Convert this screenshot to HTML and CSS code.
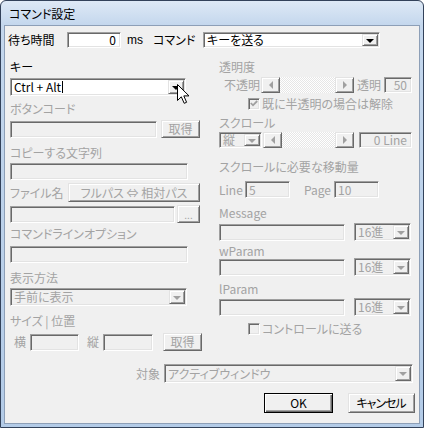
FILE: index.html
```html
<!DOCTYPE html>
<html lang="ja">
<head>
<meta charset="utf-8">
<title>コマンド設定</title>
<link rel="stylesheet" href="styles.css">
</head>
<body>
<div class="window">
  <div class="titlebar">コマンド設定</div>
  <div class="client">
    <div class="toprow">
      <span class="lbl wait-lbl">待ち時間</span>
      <span class="edit en num wait">0</span>
      <span class="lbl ms">ms</span>
      <span class="lbl cmd-lbl">コマンド</span>
      <span class="combo en cmdsel"><span class="ctext">キーを送る</span><span class="dd"><i class="down"></i></span></span>
    </div>

    <div class="cols">
      <div class="col left">
        <div class="lbl">キー</div>
        <div class="combo en keycombo mt4"><span class="ctext">Ctrl + Alt<i class="caret"></i></span><span class="dd"><i class="down"></i></span></div>

        <div class="lbl dis mt6">ボタンコード</div>
        <div class="row mt4 h18">
          <span class="edit w147 h17"></span>
          <span class="btn dis w39 h18 ml4">取得</span>
        </div>

        <div class="lbl dis mt8">コピーする文字列</div>
        <div class="edit w178 h17 mt3"></div>

        <div class="row mt3 h19">
          <span class="lbl dis w58">ファイル名</span>
          <span class="btn dis w132 h19">フルパス ⇔ 相対パス</span>
        </div>
        <div class="row mt3 h18">
          <span class="edit w165 h17"></span>
          <span class="btn dis w23 h18 ml2 dots">...</span>
        </div>

        <div class="lbl dis mt4">コマンドラインオプション</div>
        <div class="edit w178 h17 mt5"></div>

        <div class="lbl dis mt8">表示方法</div>
        <div class="combo dis w177 h18 mt3"><span class="ctext">手前に表示</span><span class="dd"><i class="down"></i></span></div>

        <div class="lbl dis mt8">サイズ | 位置</div>
        <div class="row mt5 h18">
          <span class="lbl dis ml4 w16">横</span>
          <span class="edit w49 h17"></span>
          <span class="lbl dis ml8 w16">縦</span>
          <span class="edit w50 h17"></span>
          <span class="btn dis w39 h18 ml10">取得</span>
        </div>
      </div>

      <div class="col right">
        <div class="lbl dis">透明度</div>
        <div class="row mt3 h16">
          <span class="lbl dis ml5 w37">不透明</span>
          <span class="sb w93"><span class="sbbtn"><i class="lt"></i></span><span class="track"></span><span class="sbbtn"><i class="rt"></i></span></span>
          <span class="lbl dis ml3 w27">透明</span>
          <span class="edit num w28 h16">50</span>
        </div>
        <div class="row mt4 h13">
          <span class="cb ml29"><svg width="8" height="7" viewBox="0 0 8 7"><path d="M0.8 3 L3 5.3 L7.2 1" fill="none" stroke="#a0a0a0" stroke-width="1.8"/></svg></span>
          <span class="lbl dis ml2">既に半透明の場合は解除</span>
        </div>

        <div class="lbl dis mt6">スクロール</div>
        <div class="row mt2 h16">
          <span class="combo dis w43 h16"><span class="ctext">縦</span><span class="dd"><i class="down"></i></span></span>
          <span class="sb w91 ml1"><span class="sbbtn"><i class="lt"></i></span><span class="track"></span><span class="sbbtn"><i class="rt"></i></span></span>
          <span class="edit num w53 h16 ml5">0 Line</span>
        </div>

        <div class="lbl dis mt12">スクロールに必要な移動量</div>
        <div class="row mt7 h17">
          <span class="lbl dis w26">Line</span>
          <span class="edit val w45 h17">5</span>
          <span class="lbl dis ml14 w30">Page</span>
          <span class="edit val w45 h17">10</span>
        </div>

        <div class="lbl dis mt8">Message</div>
        <div class="row mt3 h18">
          <span class="edit w126 h17"></span>
          <span class="combo dis w57 h18 ml9"><span class="ctext">16進</span><span class="dd"><i class="down"></i></span></span>
        </div>

        <div class="lbl dis mt3">wParam</div>
        <div class="row h18">
          <span class="edit w126 h17"></span>
          <span class="combo dis w57 h18 ml9"><span class="ctext">16進</span><span class="dd"><i class="down"></i></span></span>
        </div>

        <div class="lbl dis mt6">lParam</div>
        <div class="row mt2 h18">
          <span class="edit w126 h17"></span>
          <span class="combo dis w57 h18 ml9"><span class="ctext">16進</span><span class="dd"><i class="down"></i></span></span>
        </div>

        <div class="row mt6 h13">
          <span class="cb ml29"></span>
          <span class="lbl dis ml2">コントロールに送る</span>
        </div>
      </div>
    </div>

    <div class="targetrow">
      <span class="lbl dis target-lbl">対象</span>
      <span class="combo dis w249 h19"><span class="ctext">アクティブウィンドウ</span><span class="dd"><i class="down"></i></span></span>
    </div>

    <div class="btnrow">
      <span class="btn default w69 h20">OK</span>
      <span class="btn w67 h20 cancel">キャンセル</span>
    </div>
  </div>

  <svg class="cursor" width="13" height="20" viewBox="0 0 13 20"><path d="M0.5 0.5 V16.5 L4.3 12.8 L7.2 19.3 L9.6 18.3 L6.8 11.9 H12 Z" fill="#fff" stroke="#000" stroke-width="1" stroke-linejoin="miter"/></svg>
</div>
</body>
</html>
```

FILE: styles.css
```css
* { box-sizing: border-box; }
html, body { margin: 0; padding: 0; }
body {
  width: 424px;
  height: 428px;
  overflow: hidden;
  background: #ffffff;
  font-family: "Noto Sans CJK JP", "Liberation Sans", sans-serif;
  font-feature-settings: "palt";
  font-size: 12px;
  line-height: 14px;
  color: #000;
}

.window {
  position: relative;
  width: 424px;
  height: 428px;
  border: 1px solid #33425a;
  border-radius: 6px 6px 0 0;
  background: linear-gradient(to bottom, #dee9f6 0, #c4d7ed 24px, #b3cbe7 100%);
  padding: 0 3px 3px 3px;
  display: flex;
  flex-direction: column;
}

.titlebar {
  height: 24px;
  display: flex;
  align-items: center;
  padding-left: 5px;
  padding-top: 1px;
  color: #000;
}

.client {
  flex: 1;
  background: #f0f0f0;
  border: 1px solid #8d9fb7;
  padding-top: 6px;
  display: flex;
  flex-direction: column;
}

/* generic */
.lbl { display: block; height: 14px; white-space: nowrap; }
.row .lbl, .toprow .lbl { display: inline-block; flex: none; }
.dis { color: #a3a3a3; }
.row { display: flex; align-items: center; }

.edit {
  display: flex;
  align-items: center;
  flex: none;
  background: #f0f0f0;
  border: 1px solid;
  border-color: #a0a0a0 #ffffff #ffffff #a0a0a0;
  box-shadow: inset 1px 1px #696969, inset -1px -1px #e3e3e3;
  padding: 0 3px;
  line-height: 14px;
  color: #a3a3a3;
  white-space: nowrap;
}
.edit.en { background: #fff; color: #000; }
.edit.num { justify-content: flex-end; padding-right: 4px; }
.edit.val { padding-left: 3px; }

.combo {
  display: flex;
  align-items: stretch;
  flex: none;
  background: #f0f0f0;
  border: 1px solid;
  border-color: #a0a0a0 #ffffff #ffffff #a0a0a0;
  box-shadow: inset 1px 1px #696969, inset -1px -1px #e3e3e3;
  padding: 1px;
  line-height: 14px;
  color: #a3a3a3;
}
.combo.en { background: #fff; color: #000; }
.ctext { flex: 1; display: flex; align-items: center; padding-left: 2px; white-space: nowrap; }
.dd {
  width: 16px;
  flex: none;
  display: flex;
  align-items: center;
  justify-content: center;
  background: #f0f0f0;
  border: 1px solid;
  border-color: #e3e3e3 #696969 #696969 #e3e3e3;
  box-shadow: inset 1px 1px #fff, inset -1px -1px #a0a0a0;
}
.down {
  display: block;
  width: 0; height: 0;
  border-left: 4px solid transparent;
  border-right: 4px solid transparent;
  border-top: 4px solid #a0a0a0;
  margin-top: 1px;
}
.combo.en .down { border-top-color: #000; }
.caret { display: inline-block; width: 1px; height: 12px; background: #000; margin-left: 1px; }

.btn {
  display: flex;
  align-items: center;
  justify-content: center;
  flex: none;
  background: #f0f0f0;
  border: 1px solid;
  border-color: #e3e3e3 #696969 #696969 #e3e3e3;
  box-shadow: inset 1px 1px #fff, inset -1px -1px #a0a0a0;
  white-space: nowrap;
  line-height: 14px;
  color: #000;
}
.btn.dis { color: #a3a3a3; }
.btn.dots { align-items: flex-end; padding-bottom: 2px; font-size: 10px; line-height: 10px; }
.btn.default {
  border-color: #000;
  box-shadow: inset 1px 1px #fff, inset -1px -1px #696969, inset -2px -2px #a0a0a0;
}
.cancel { letter-spacing: -1px; padding-right: 1px; }

/* scrollbar */
.sb { display: flex; flex: none; height: 16px; }
.sbbtn {
  width: 19px;
  flex: none;
  display: flex;
  align-items: center;
  justify-content: center;
  background: #f0f0f0;
  border: 1px solid;
  border-color: #e3e3e3 #696969 #696969 #e3e3e3;
  box-shadow: inset 1px 1px #fff, inset -1px -1px #a0a0a0;
}
.track {
  flex: 1;
  background-color: #fff;
  background-image: repeating-conic-gradient(#e6e6e6 0 25%, #ffffff 0 50%);
  background-size: 2px 2px;
}
.lt, .rt { display: block; width: 0; height: 0; border-top: 4px solid transparent; border-bottom: 4px solid transparent; }
.lt { border-right: 4px solid #a0a0a0; }
.rt { border-left: 4px solid #a0a0a0; }

/* checkbox */
.cb {
  width: 12px; height: 12px;
  flex: none;
  display: flex;
  align-items: center;
  justify-content: center;
  background: #f0f0f0;
  border: 1px solid;
  border-color: #a0a0a0 #ffffff #ffffff #a0a0a0;
  box-shadow: inset 1px 1px #696969, inset -1px -1px #e3e3e3;
}

/* top row */
.toprow { display: flex; align-items: center; height: 16px; padding-left: 3px; }
.wait-lbl { width: 59px; }
.wait { width: 54px; height: 16px; }
.ms { width: 26px; margin-left: 6px; font-family: "Liberation Sans", sans-serif; }
.cmd-lbl { width: 50px; }
.cmdsel { width: 177px; height: 16px; }

/* columns */
.cols { display: flex; align-items: flex-start; margin-top: 12px; margin-left: 5px; }
.col { display: flex; flex-direction: column; }
.col.left { width: 192px; }
.col.right { width: 194px; margin-left: 17px; }
.keycombo { width: 176px; height: 18px; }

.targetrow { display: flex; justify-content: flex-end; align-items: center; margin-top: 13px; padding-right: 6px; }
.target-lbl { display: inline-block; margin-right: 4px; }
.btnrow { display: flex; justify-content: flex-end; gap: 15px; margin-top: 10px; padding-right: 4px; }

.cursor { position: absolute; left: 176px; top: 83px; }

/* sizes */
.w16 { width: 16px; } .w23 { width: 23px; } .w26 { width: 26px; } .w27 { width: 27px; }
.w28 { width: 28px; } .w30 { width: 30px; } .w37 { width: 37px; } .w39 { width: 39px; }
.w43 { width: 43px; } .w45 { width: 45px; } .w49 { width: 49px; } .w50 { width: 50px; }
.w53 { width: 53px; } .w57 { width: 57px; } .w58 { width: 58px; } .w67 { width: 67px; }
.w69 { width: 69px; } .w91 { width: 91px; } .w93 { width: 93px; } .w126 { width: 126px; }
.w132 { width: 132px; } .w147 { width: 147px; } .w165 { width: 165px; } .w177 { width: 177px; }
.w178 { width: 178px; } .w249 { width: 249px; }
.h13 { height: 13px; } .h16 { height: 16px; } .h17 { height: 17px; } .h18 { height: 18px; }
.h19 { height: 19px; } .h20 { height: 20px; }
.mt2 { margin-top: 2px; } .mt3 { margin-top: 3px; } .mt4 { margin-top: 4px; } .mt5 { margin-top: 5px; }
.mt6 { margin-top: 6px; } .mt7 { margin-top: 7px; } .mt8 { margin-top: 8px; } .mt12 { margin-top: 12px; }
.ml1 { margin-left: 1px; } .ml2 { margin-left: 2px; } .ml3 { margin-left: 3px; } .ml4 { margin-left: 4px; }
.ml5 { margin-left: 5px; } .ml8 { margin-left: 8px; } .ml9 { margin-left: 9px; } .ml10 { margin-left: 10px; }
.ml14 { margin-left: 14px; } .ml29 { margin-left: 29px; }
```
